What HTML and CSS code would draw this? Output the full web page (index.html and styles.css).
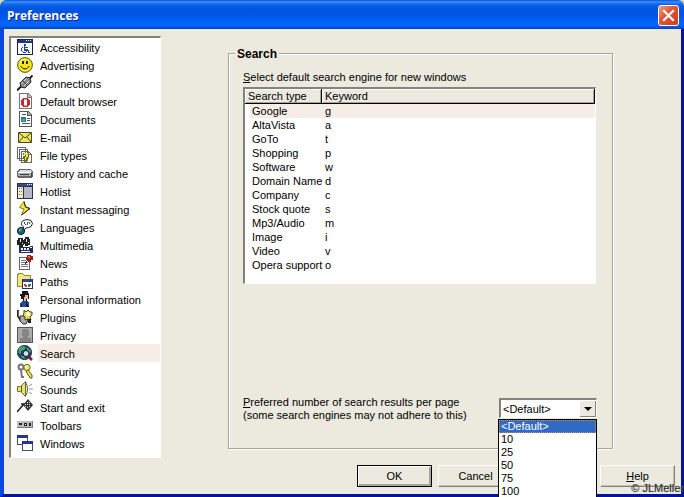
FILE: index.html
```html
<!DOCTYPE html>
<html lang="en">
<head>
<meta charset="utf-8">
<title>Preferences</title>
<link rel="stylesheet" href="styles.css">
</head>
<body>
<div class="window">
  <header class="titlebar">
    <h1 class="title">Preferences</h1>
    <button class="close" type="button" aria-label="Close">
      <svg viewBox="0 0 19 19"><path d="M5 5l9 9M14 5l-9 9" stroke="#fff" stroke-width="2.2" stroke-linecap="square"/></svg>
    </button>
  </header>
  <form class="client">
    <div class="columns">
      <nav class="sidebar">
        <a class="item" href="#"><svg class="icon" viewBox="0 0 16 16"><path fill="#1c2050" d="M0 0h16v16H0z"/><path fill="#fff" d="M1 4h14v11H1z"/><path fill="#26358c" d="M1 1h14v3H1z"/><path fill="#fff" d="M9 1h1v1H9zM11 1h1v1h-1zM13 1h1v1h-1z"/><path fill="#204a88" d="M7 5h2v2H7zM7 7h1v1h3v1H8v1h3v1h1v2h1v1h-2v-2H7zM5 8h1v1H5v3h1v1h3v-1h1v1H9v1H6v-1H5v-1H4V9h1z"/></svg><span>Accessibility</span></a>
        <a class="item" href="#"><svg class="icon smooth" viewBox="0 0 16 16"><circle cx="8" cy="8" r="7.4" fill="#f4e61c" stroke="#5c5a00"/><path d="M3 6q2-4 5-4" fill="none" stroke="#fffba0"/><path fill="#222" d="M5 4h2v3H5zM9 4h2v3H9z"/><path d="M3.5 9q4.500 6 9 0" fill="none" stroke="#222"/></svg><span>Advertising</span></a>
        <a class="item" href="#"><svg class="icon smooth" viewBox="0 0 16 16"><path d="M0 15.500l5-5M11 5l4.500-4.500" stroke="#222" stroke-width="2"/><path d="M3 8l6-6 4 1 1 4-6 6-4-1z" fill="#8c8c8c" stroke="#222"/><path d="M4.500 8.500l5-5M7 11l5-5" stroke="#d8d8d8"/><path d="M5 5l6 6" stroke="#333"/></svg><span>Connections</span></a>
        <a class="item" href="#"><svg class="icon" viewBox="0 0 16 16"><path fill="#777" d="M2 0h9l4 4v12H2z"/><path fill="#fff" d="M3 1h7v4h4v10H3z"/><path fill="#bbb" d="M11 1l3 3h-3z"/><path fill="#c8292e" d="M6 5h5v1h1v1h1v5h-1v1h-1v1H6v-1H5v-1H4V7h1V6h1z"/><path fill="#fff" d="M7 7h3v5H7z"/><path fill="#e8a0a0" d="M7 6h3v1H7zM7 12h3v1H7z"/></svg><span>Default browser</span></a>
        <a class="item" href="#"><svg class="icon" viewBox="0 0 16 16"><path fill="#555" d="M2 0h9l4 4v12H2z"/><path fill="#fff" d="M3 1h7v4h4v10H3z"/><path fill="#aaa" d="M11 1l3 3h-3z"/><path fill="#555" d="M5 3h4v1H5zM10 7h3v1h-3zM10 9h3v1h-3zM5 12h8v1H5z"/><path fill="#267aa0" d="M4 6h5v5H4z"/><path fill="#54b072" d="M5 8h3v2H5z"/></svg><span>Documents</span></a>
        <a class="item" href="#"><svg class="icon smooth" viewBox="0 0 16 16"><path fill="#ece668" stroke="#4a4814" d="M1.500 3.500h13v10h-13z"/><path d="M2 4l6 5 6-5M2 13l4-5M14 13l-4-5" stroke="#4a4814" fill="none"/></svg><span>E-mail</span></a>
        <a class="item" href="#"><svg class="icon" viewBox="0 0 16 16"><path fill="#fff" stroke="#666" d="M.5.5h8v11h-8zM2.500 2.500h8v11h-8zM4.500 4.500h7l3 3v8h-10z"/><path fill="#666" d="M11 4h1v3h3v1h-4z"/><path fill="#777000" d="M6 6h6v5h-1v1h-1v3H7v-3H6V9h2v1h2V8H6z"/><path fill="#ede33d" d="M7 6h4v4h-1v1H9v2H8v-3h1V8H7z"/></svg><span>File types</span></a>
        <a class="item" href="#"><svg class="icon" viewBox="0 0 16 16"><path fill="#666" d="M2 4h12l2 3v4l-2 2H1l-1-2V7z"/><path fill="#ddd" d="M3 5h11l1 2H1z"/><path fill="#aaa" d="M1 8h13v3H1z"/><path fill="#fff" d="M1 7h13v1H1z"/><path fill="#444" d="M3 9h9v1H3zM14 8h1v4h-1z"/></svg><span>History and cache</span></a>
        <a class="item" href="#"><svg class="icon" viewBox="0 0 16 16"><path fill="#303044" d="M0 0h16v16H0z"/><path fill="#394ba0" d="M1 1h14v2H1z"/><path fill="#eeeec8" d="M1 4h5v11H1z"/><path fill="#b7b7ca" d="M7 4h8v11H7z"/><path fill="#7274b2" d="M2 5h1v1H2zM2 8h1v1H2zM2 11h1v1H2z"/><path fill="#777" d="M4 5h1v1H4zM4 8h1v1H4zM4 11h1v1H4z"/><path fill="#fff" d="M10 1h1v1h-1zM12 1h1v1h-1zM14 1h1v1h-1z"/></svg><span>Hotlist</span></a>
        <a class="item" href="#"><svg class="icon smooth" viewBox="0 0 16 16"><path fill="#fbe83e" stroke="#8a7d00" d="M7 .5L2.500 6.500 7 8 4.500 14 13 7.500 8.500 6z"/><path d="M7 .5L8.500 6 13 7.500 4.500 14" fill="none" stroke="#222"/></svg><span>Instant messaging</span></a>
        <a class="item" href="#"><svg class="icon smooth" viewBox="0 0 16 16"><path fill="#fff" stroke="#222" d="M6 1.500Q10-.5 14 1.500q3 3 0 6-2 1.500-5 1.500l-3 3 .5-4Q2.500 5 6 1.500z"/><path d="M8 3l-1 1 2 2M11 3l-1 3M12 3l1 2" stroke="#444" fill="none"/><circle cx="4" cy="12" r="3.600" fill="#1c5f85" stroke="#123"/><path fill="#4ab867" d="M2 10l3-1-1 3-2 1z"/></svg><span>Languages</span></a>
        <a class="item" href="#"><svg class="icon" viewBox="0 0 16 16"><path fill="#222" d="M1 1h5v2h1v5H6v2H2V8H0V3h1zM8 0h4v2h1v6h-2v1H8V7H7V2h1z"/><path fill="#eee" d="M3 2h1v3H3zM9 2h1v3H9zM5 6h1v1H5zM11 5h1v1h-1z"/><path fill="#252b66" d="M2 10h11v-1h3v7H2z"/><path fill="#fff" d="M4 11h2v2H4zM7 11h2v2H7zM10 11h2v2h-2zM13 10h2v1h-2zM4 14h9v1H4z"/></svg><span>Multimedia</span></a>
        <a class="item" href="#"><svg class="icon" viewBox="0 0 16 16"><path fill="#fff" stroke="#666" d="M2.500 2.500h10v12h-10z"/><path fill="#777" d="M4 5h5v1H4zM4 7h7v1H4zM4 9h7v1H4zM4 11h7v1H4z"/><path fill="#9b201d" d="M10 0h4v1h2v4h-2v2h-3V5H9V2h1z"/><path fill="#ee6a54" d="M11 1h2v2h-2z"/><path d="M11 5l-3 4" stroke="#333"/></svg><span>News</span></a>
        <a class="item" href="#"><svg class="icon" viewBox="0 0 16 16"><path fill="#f3e582" stroke="#99883a" d="M.5 2.500l1-2h4l2 2h6v11H.5z"/><path fill="#fff" stroke="#283058" d="M5.500 6.500h10v9h-10z"/><path fill="#34458f" d="M6 6h9v3H6z"/><path fill="#c83833" d="M7 11h2v2H7zM8 12h2v2H8z"/><path fill="#38806d" d="M11 11h3v2h-1v1h-2z"/></svg><span>Paths</span></a>
        <a class="item" href="#"><svg class="icon" viewBox="0 0 16 16"><path fill="#18181e" d="M5 0h6v2h1v6h-2v2H6V8H4V5H3V3h2z"/><path fill="#eeb77b" d="M8 4h3v4H9v2H7V6h1z"/><path fill="#1e4f9c" d="M5 10h5l2 2v4H3v-4z"/><path fill="#151c38" d="M9 10h1v3h1v2h1v1H9zM4 13h1v3H4z"/></svg><span>Personal information</span></a>
        <a class="item" href="#"><svg class="icon smooth" viewBox="0 0 16 16"><path d="M1 1v6l3 5 4 2" fill="none" stroke="#222" stroke-width="2"/><path d="M2 2v5l3 4" fill="none" stroke="#ccc"/><path d="M3 7h5l3 4-2 4H6l-3-3z" fill="#aaa" stroke="#333"/><path d="M7 1l2 2 2-2 2 2h2v3l-2 2 1 3-3-1-3 1V8L6 6l1-2z" fill="#e3df52" stroke="#4d4914"/><circle cx="11" cy="5" r="2" fill="#fff"/><path fill="#222" d="M11 10h3v4h-3z"/></svg><span>Plugins</span></a>
        <a class="item" href="#"><svg class="icon" viewBox="0 0 16 16"><path fill="#555" d="M0 0h16v16H0z"/><path fill="#aaa" d="M1 1h14v14H1z"/><path fill="#858585" d="M6 2h5v1h1v6h-1v2h3v4H3v-4h3V9H5V3h1z"/></svg><span>Privacy</span></a>
        <a class="item selected" href="#"><svg class="icon smooth" viewBox="0 0 16 16"><circle cx="7.500" cy="7.500" r="7" fill="#1b477d" stroke="#142638"/><path fill="#49a468" d="M2 3l4-2 3 1-2 3-3 1v3L1 8zM10 2l4 4-1 2-3-3zM4 11h3l1 3-3-1z"/><circle cx="9" cy="8.500" r="3" fill="#c8e5ee" stroke="#111"/><path d="M11 11l4 4" stroke="#7b2222" stroke-width="2.500"/></svg><span>Search</span></a>
        <a class="item" href="#"><svg class="icon smooth" viewBox="0 0 16 16"><g fill="none" stroke="#777" stroke-width="2"><circle cx="4" cy="4" r="2.500"/><path d="M4 7l1 8M5 14h2"/></g><circle cx="10" cy="4.500" r="3.200" fill="#f1e767" stroke="#6f6721"/><circle cx="9" cy="3.500" r="1" fill="#fff"/><path d="M11 7l4 5v3h-2l-1-2-1-1-2-4z" fill="#eadc4c" stroke="#635b22"/></svg><span>Security</span></a>
        <a class="item" href="#"><svg class="icon smooth" viewBox="0 0 16 16"><path fill="#ece36b" stroke="#77702b" d="M.5 5.500h3l5-5v15l-5-5h-3z"/><path d="M4.500 5v6M8.500 1q4 7 0 14" stroke="#555" fill="none"/><path d="M12 5l3-2M12 8h4M12 11l3 2" stroke="#999"/></svg><span>Sounds</span></a>
        <a class="item" href="#"><svg class="icon smooth" viewBox="0 0 16 16"><path d="M0 13L7 5H4" stroke="#222" stroke-width="1.500" fill="none"/><path d="M11 0l5 6-5 6-5-6z" fill="#333"/><path fill="#ddd" d="M10 3h1v1h-1zM12 3h1v1h-1zM8 5h1v1H8zM10 5h1v1h-1zM12 5h1v1h-1zM10 8h1v1h-1zM12 7h1v1h-1zM8 7h1v1H8z"/></svg><span>Start and exit</span></a>
        <a class="item" href="#"><svg class="icon" viewBox="0 0 16 16"><path fill="#777" d="M0 4h16v7H0z"/><path fill="#bbb" d="M0 4h15v6H0z"/><path fill="#222" d="M2 6h3v2H2zM7 6h3v3H7zM12 6h2v3h-2z"/><path fill="#eee" d="M8 7h1v1H8zM3 5h1v1H3z"/></svg><span>Toolbars</span></a>
        <a class="item" href="#"><svg class="icon" viewBox="0 0 16 16"><path fill="#fff" stroke="#444b70" d="M.5.5h10v9H.5z"/><path fill="#26358b" d="M0 0h11v3H0z"/><path fill="#fff" stroke="#444b70" d="M5.500 6.500h10v9h-10z"/><path fill="#26358b" d="M5 6h11v3H5z"/></svg><span>Windows</span></a>
      </nav>
      <fieldset class="group">
        <legend>Search</legend>
        <p class="caption" id="engines-label"><u>S</u>elect default search engine for new windows</p>
        <div class="listview">
          <table class="engines" aria-labelledby="engines-label">
            <thead><tr><th class="type">Search type</th><th>Keyword</th></tr></thead>
            <tbody>
              <tr class="selected"><td>Google</td><td>g</td></tr>
              <tr><td>AltaVista</td><td>a</td></tr>
              <tr><td>GoTo</td><td>t</td></tr>
              <tr><td>Shopping</td><td>p</td></tr>
              <tr><td>Software</td><td>w</td></tr>
              <tr><td>Domain Name</td><td>d</td></tr>
              <tr><td>Company</td><td>c</td></tr>
              <tr><td>Stock quote</td><td>s</td></tr>
              <tr><td>Mp3/Audio</td><td>m</td></tr>
              <tr><td>Image</td><td>i</td></tr>
              <tr><td>Video</td><td>v</td></tr>
              <tr><td>Opera support</td><td>o</td></tr>
            </tbody>
          </table>
        </div>
        <div class="results">
          <label for="count"><u>P</u>referred number of search results per page<br>(some search engines may not adhere to this)</label>
          <div class="combo">
            <select id="count"><option>&lt;Default&gt;</option></select>
            <span class="arrow"></span>
            <ul class="menu" role="listbox" aria-label="Results per page">
              <li class="active" role="option" aria-selected="true">&lt;Default&gt;</li>
              <li role="option">10</li>
              <li role="option">25</li>
              <li role="option">50</li>
              <li role="option">75</li>
              <li role="option">100</li>
            </ul>
          </div>
        </div>
      </fieldset>
    </div>
    <footer class="actions">
      <button class="button default" type="button">OK</button>
      <button class="button" type="button">Cancel</button>
      <button class="button help" type="button"><u>H</u>elp</button>
    </footer>
  </form>
  <small class="credit">© JLMeller</small>
</div>
</body>
</html>
```
FILE: styles.css
```css
* { box-sizing: border-box; }

body {
  margin: 0;
  overflow: hidden;
  background: #e6d7a6;
  color: #000;
  font: 11px/14px "Liberation Sans", Arial, sans-serif;
}

button, select { font: inherit; color: inherit; }

.window {
  position: relative;
  display: flex;
  flex-direction: column;
  min-height: 100vh;
  overflow: hidden;
  border-radius: 6px 6px 0 0;
  background: #ece9de;
}

.titlebar {
  display: flex;
  align-items: center;
  justify-content: space-between;
  height: 29px;
  padding: 2px 5px 0 7px;
  background: linear-gradient(#0a50d8 0, #3b90fc 2px, #1068f0 4px, #0054e0 8px, #0055e8 16px, #0366ff 23px, #0162f8 26px, #0040c0 29px);
}

.title {
  margin: 0;
  color: #fff;
  font: bold 12px/20px "Open Sans", sans-serif;
  text-shadow: 1px 1px 0 #0c2a80;
}

.close {
  width: 21px;
  height: 21px;
  padding: 0;
  border: 1px solid #fff;
  border-radius: 3px;
  background: linear-gradient(135deg, #eea088, #e0583a 40%, #c83c18);
}

.close svg { display: block; width: 19px; height: 19px; }

.client {
  flex: 1;
  display: flex;
  flex-direction: column;
  padding: 7px 6px 7px 5px;
  border: solid;
  border-width: 0 3px 3px 4px;
  border-color: #0014a0 #00148c #0014a0 #0a48e0;
}

.columns { flex: 1; display: flex; gap: 67px; }

.sidebar {
  flex: none;
  width: 152px;
  padding-bottom: 4px;
  border: 1px solid #fff;
  border-top: 2px solid #84827a;
  border-left: 2px solid #84827a;
  background: #fff;
}

.item {
  display: flex;
  align-items: center;
  gap: 5px;
  height: 18px;
  padding-left: 6px;
  color: #000;
  text-decoration: none;
}

.item span { flex: 1; padding: 3px 2px 1px; }
.item.selected span { background: #f5ede6; }

.icon { flex: none; width: 16px; height: 16px; shape-rendering: crispEdges; }
.smooth { shape-rendering: auto; }

.group {
  flex: 1;
  display: flex;
  flex-direction: column;
  min-width: 0;
  margin: 9px 62px 9px 0;
  padding: 9px 16px 26px 14px;
  border: 1px solid #a7a599;
  box-shadow: 1px 1px 0 #fff, inset 1px 1px 0 #fff;
}

.group legend {
  margin-left: -8px;
  padding: 2px 2px 0;
  background: #ece9de;
  font-size: 12px;
  font-weight: bold;
}

.caption { margin: 0 0 3px; }

.listview {
  min-height: 197px;
  border: 1px solid #fff;
  border-top: 2px solid #84827a;
  border-left: 2px solid #84827a;
  background: #fff;
}

.engines { width: 100%; border-collapse: separate; border-spacing: 0; table-layout: fixed; }

.engines th {
  height: 15px;
  padding: 0 3px;
  border-bottom: 1px solid #000;
  border-right: 1px solid #000;
  background: #ece9de;
  box-shadow: inset 1px 1px 0 #fff, inset -1px -1px 0 #a7a599;
  font-weight: normal;
  line-height: 14px;
  text-align: left;
}

.engines .type { width: 77px; }
.engines td { height: 14px; padding: 1px 3px 0; line-height: 13px; white-space: nowrap; }
.engines td:first-child { padding-left: 7px; padding-right: 0; }

.engines .selected td { background: #f5ede6; }
.engines .selected td:first-child { border-left: 5px solid #fff; padding-left: 2px; }

.results { display: flex; justify-content: space-between; margin-top: auto; }
.results label { line-height: 13px; }

.combo { position: relative; width: 98px; height: 20px; margin: 2px -1px 0 0; }

.combo select {
  appearance: none;
  display: block;
  width: 100%;
  height: 20px;
  padding: 0 2px;
  border: 1px solid #fff;
  border-top: 2px solid #84827a;
  border-left: 2px solid #84827a;
  border-radius: 0;
  background: #fff;
}

.arrow {
  position: absolute;
  top: 2px;
  right: 1px;
  display: grid;
  place-items: center;
  width: 17px;
  height: 17px;
  background: #ece9de;
  box-shadow: inset 1px 1px 0 #fff, inset -1px -1px 0 #84827a;
  pointer-events: none;
}

.arrow::before {
  content: "";
  border: 4px solid transparent;
  border-top-color: #000;
  border-bottom: 0;
}

.menu {
  position: absolute;
  z-index: 1;
  top: 21px;
  left: -1px;
  width: 99px;
  margin: 0;
  padding: 0;
  border: 1px solid #000;
  background: #fff;
  list-style: none;
  line-height: 13px;
}

.menu li { padding: 0 2px; }
.menu .active { background: #316ac5; color: #fff; outline: 1px dotted #c8924c; outline-offset: -1px; }

.actions { display: flex; justify-content: flex-end; gap: 6px; margin-top: 7px; }

.button {
  width: 75px;
  height: 22px;
  padding: 0;
  border: 1px solid;
  border-color: #fff #84827a #84827a #fff;
  border-radius: 0;
  background: #ece9de;
  box-shadow: inset -1px -1px 0 #c4c1b2;
}

.button.default { border-color: #000; box-shadow: inset 1px 1px 0 #fff, inset -2px -2px 0 #a7a599; }
.button.help { margin-left: 81px; }

.credit {
  position: absolute;
  right: 0;
  bottom: 2px;
  color: #2a2a2a;
  font-size: 11px;
  text-shadow: 0 0 1px #a8a8a8;
}
```
